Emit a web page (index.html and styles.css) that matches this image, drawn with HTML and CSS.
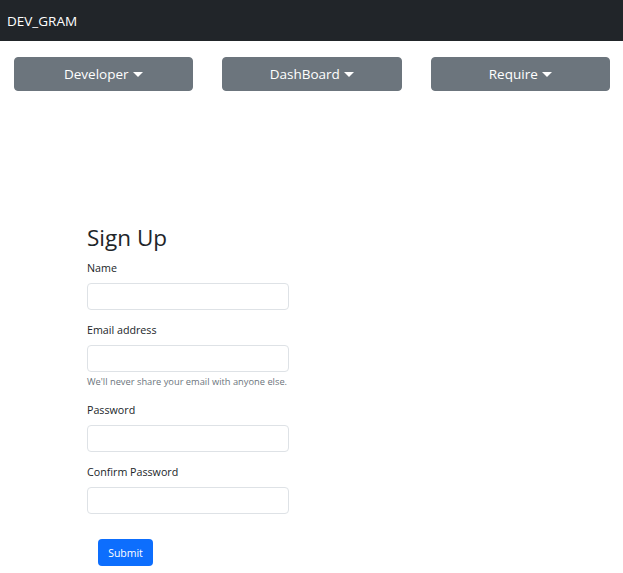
FILE: index.html
```html
<!DOCTYPE html>
<html lang="en">
<head>
    <meta charset="UTF-8">
    <meta name="viewport" content="width=device-width, initial-scale=1.0">
    <title>DEV_GRAM</title>
    <link rel="stylesheet" href="styles.css">
</head>
<body>
    <nav class="navbar">
        <span class="brand">DEV_GRAM</span>
    </nav>

    <div class="menu-row">
        <button class="dropdown-btn">Developer<span class="caret"></span></button>
        <button class="dropdown-btn">DashBoard<span class="caret"></span></button>
        <button class="dropdown-btn">Require<span class="caret"></span></button>
    </div>

    <main class="signup">
        <h2 class="signup-title">Sign Up</h2>
        <form class="signup-form">
            <div class="field">
                <label for="name">Name</label>
                <input type="text" id="name">
            </div>
            <div class="field">
                <label for="email">Email address</label>
                <input type="email" id="email">
                <small class="help">We'll never share your email with anyone else.</small>
            </div>
            <div class="field">
                <label for="password">Password</label>
                <input type="password" id="password">
            </div>
            <div class="field">
                <label for="confirm">Confirm Password</label>
                <input type="password" id="confirm">
            </div>
            <button type="submit" class="submit-btn">Submit</button>
        </form>
    </main>
</body>
</html>
```

FILE: styles.css
```css
body {
    margin: 0;
    font-family: "Open Sans", sans-serif;
    color: #212529;
    background-color: #fff;
}

.navbar {
    background-color: #212529;
    height: 41px;
    display: flex;
    align-items: center;
    padding: 0 7px;
}

.brand {
    color: #fff;
    font-size: 13.5px;
}

.menu-row {
    display: grid;
    grid-template-columns: repeat(3, 1fr);
    column-gap: 29px;
    padding: 16px 13px 0 13.5px;
}

.dropdown-btn {
    height: 34px;
    background-color: #6c757d;
    color: #fff;
    border: 1px solid #6c757d;
    border-radius: 4px;
    font-family: inherit;
    font-size: 13.5px;
    display: flex;
    align-items: center;
    justify-content: center;
    cursor: pointer;
}

/* little triangle after the dropdown label */
.caret {
    display: inline-block;
    margin-left: 4px;
    margin-top: 1px;
    border-top: 5px solid #fff;
    border-left: 5px solid transparent;
    border-right: 5px solid transparent;
}

.signup {
    padding: 131px 0 0 87px;
}

.signup-title {
    margin: 0 0 6px;
    font-size: 22.5px;
    font-weight: 400;
    line-height: 32px;
}

.signup-form {
    width: 202px;
}

.field {
    margin-bottom: 12px;
}

.field label {
    display: block;
    font-size: 10.7px;
    line-height: 16px;
    margin-bottom: 7px;
}

.field input {
    display: block;
    box-sizing: border-box;
    width: 100%;
    height: 27px;
    border: 1px solid #dee2e6;
    border-radius: 4px;
    padding: 0 8px;
}

.help {
    display: block;
    margin: 2px 0 3px;
    font-size: 9.3px;
    line-height: 16px;
    color: #6c757d;
    white-space: nowrap;
}

.submit-btn {
    margin: 13px 0 0 11px;
    width: 55px;
    height: 27px;
    background-color: #0d6efd;
    color: #fff;
    border: none;
    border-radius: 4px;
    font-family: inherit;
    font-size: 10.5px;
    cursor: pointer;
}
```
